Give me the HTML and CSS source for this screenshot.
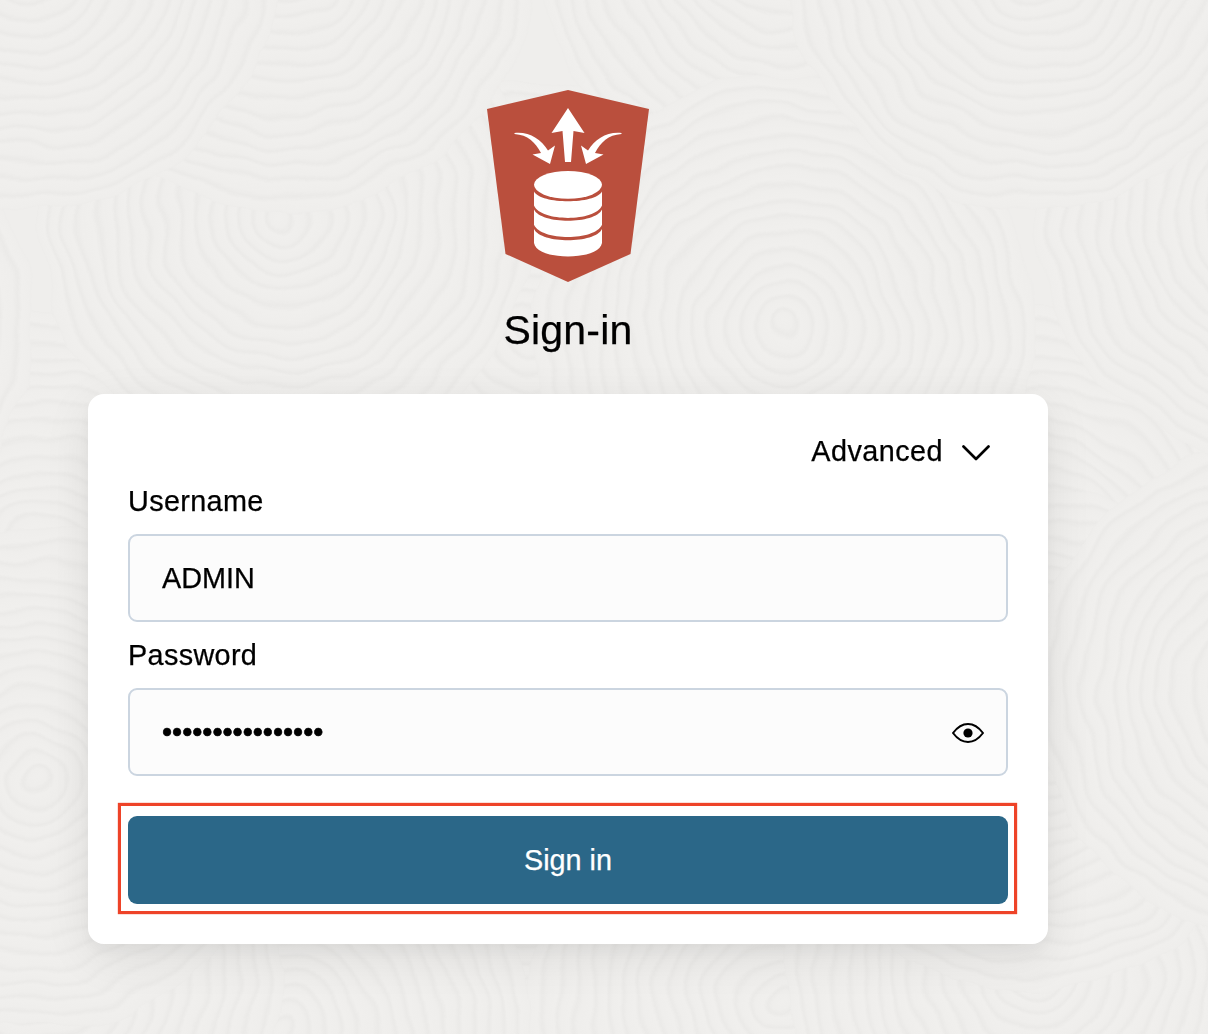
FILE: index.html
```html
<!DOCTYPE html>
<html lang="en">
<head>
<meta charset="utf-8">
<title>Sign-in</title>
<link rel="stylesheet" href="styles.css">
</head>
<body>
<svg class="backdrop" viewBox="0 0 1208 1034" aria-hidden="true">
  <defs>
    <radialGradient id="rings" gradientUnits="userSpaceOnUse" cx="0" cy="0" r="16" spreadMethod="repeat">
      <stop offset="0" stop-color="#f0efed"/>
      <stop offset=".5" stop-color="#efeeec"/>
      <stop offset=".76" stop-color="#ebeae8"/>
      <stop offset="1" stop-color="#f0efed"/>
    </radialGradient>
    <circle id="swirl" r="250" fill="url(#rings)"/>
    <filter id="waver" x="0" y="0" width="1208" height="1034" filterUnits="userSpaceOnUse" color-interpolation-filters="sRGB">
      <feTurbulence type="fractalNoise" baseFrequency=".016" numOctaves="2" seed="4"/>
      <feDisplacementMap in="SourceGraphic" scale="22" xChannelSelector="R" yChannelSelector="G"/>
    </filter>
  </defs>
  <g filter="url(#waver)">
    <rect x="-50" y="-50" width="1310" height="1140" fill="#efeeec"/>
    <use href="#swirl" x="530" y="330"/>
    <use href="#swirl" x="785" y="-60"/>
    <use href="#swirl" x="40" y="560"/>
    <use href="#swirl" x="1040" y="560"/>
    <use href="#swirl" x="530" y="900"/>
    <use href="#swirl" x="780" y="1000"/>
    <use href="#swirl" x="285" y="1030"/>
    <use href="#swirl" x="1285" y="1070"/>
    <use href="#swirl" x="35" y="970"/>
    <use href="#swirl" x="1035" y="970"/>
    <use href="#swirl" x="35" y="780"/>
    <use href="#swirl" x="1035" y="740"/>
    <use href="#swirl" x="1285" y="690"/>
    <use href="#swirl" x="285" y="215"/>
    <use href="#swirl" x="1285" y="215"/>
    <use href="#swirl" x="-220" y="325"/>
    <use href="#swirl" x="785" y="325"/>
    <use href="#swirl" x="285" y="-40"/>
    <use href="#swirl" x="30" y="-40"/>
    <use href="#swirl" x="1035" y="-40"/>
  </g>
</svg>
<main class="page">
  <header class="brand">
    <svg class="logo" viewBox="0 0 162 192" aria-hidden="true">
      <path fill="#ba4f3d" d="M81 0 162 19 143.500 164 81 192 18.500 164 0 19Z"/>
      <g fill="#fff">
        <path d="M81 18 97.500 43 86.500 41 84 72H78L75.500 41 64.500 43Z"/>
        <path id="inflow" d="M27.500 43C42 41.500 54 49 61 60.500L68 55.500 63 74 45.500 64.500 54 63C48 52 41 45 27.500 44Z"/>
        <use href="#inflow" transform="matrix(-1 0 0 1 162 0)"/>
        <ellipse cx="81" cy="94.800" rx="34" ry="13.900"/>
        <path d="M47 101.500C54 114.500 108 114.500 115 101.500V115.500C108 132 54 132 47 115.500Z"/>
        <path d="M47 119.500C54 134.500 108 134.500 115 119.500V134.700C108 151 54 151 47 134.700Z"/>
        <path d="M47 139C54 154 108 154 115 139V153C112 171 50 171 47 153Z"/>
      </g>
    </svg>
    <h1 class="title">Sign-in</h1>
  </header>
  <form class="card">
    <div class="advanced">
      <span>Advanced</span>
      <svg class="chevron" viewBox="0 0 28 16" aria-hidden="true"><path d="M1.500 1.500 14 14 26.500 1.500"/></svg>
    </div>
    <div class="label">Username</div>
    <div class="field">ADMIN</div>
    <div class="label label-password">Password</div>
    <div class="field">
      <span class="dots">••••••••••••••••</span>
      <svg class="eye" viewBox="0 0 32 20" aria-hidden="true"><path d="M1 10C10-2 22-2 31 10 22 22 10 22 1 10Z"/><circle cx="16" cy="10" r="4.600"/></svg>
    </div>
    <div class="submit"><button class="button" type="button">Sign in</button></div>
  </form>
</main>
</body>
</html>
```

FILE: styles.css
```css
* { box-sizing: border-box; }
body {
  margin: 0;
  height: 1034px;
  overflow: hidden;
  background: #efeeec;
  color: #000;
  font: 28.8px/40px "Liberation Sans", Arial, sans-serif;
  -webkit-text-stroke: .25px currentColor;
}
.backdrop { position: absolute; inset: 0; width: 1208px; height: 1034px; z-index: -1; }
.page { width: 1136px; padding-top: 90px; display: flex; flex-direction: column; align-items: center; }
.brand { display: flex; flex-direction: column; align-items: center; height: 304px; }
.logo { width: 162px; height: 192px; }
.title { margin: 24px 0 0; font-size: 41px; line-height: 48px; font-weight: 400; letter-spacing: .2px; }
.card {
  width: 960px;
  height: 550px;
  padding: 37px 40px 40px;
  background: #fff;
  border-radius: 16px;
  box-shadow: 0 12px 48px rgba(0,0,0,.08), 0 8px 16px rgba(0,0,0,.04);
}
.advanced { display: flex; justify-content: flex-end; align-items: center; gap: 19px; height: 40px; padding-right: 18px; letter-spacing: .45px; }
.chevron { width: 28px; height: 16px; margin-top: 3px; fill: none; stroke: #000; stroke-width: 2.7; stroke-linecap: round; stroke-linejoin: round; }
.label { height: 40px; margin: 10px 0 13px; letter-spacing: .35px; }
.label-password { margin-top: 13px; margin-bottom: 13px; }
.field {
  display: flex;
  align-items: center;
  justify-content: space-between;
  height: 88px;
  padding: 0 22px 0 32px;
  border: 2px solid #cbd5e0;
  border-radius: 9px;
  background: #fcfcfc;
}
.dots { -webkit-text-stroke: .6px #000; }
.eye { width: 32px; height: 20px; margin-top: 2px; overflow: visible; }
.eye path { fill: none; stroke: #000; stroke-width: 2; stroke-linejoin: round; }
.submit { position: relative; margin-top: 40px; }
.submit::after {
  content: "";
  position: absolute;
  inset: -13px -9px -10px -10px;
  border: 3px solid #ee4328;
  box-shadow: 0 0 1px #ee4328;
}
.button { display: block; width: 100%; height: 88px; padding: 0; border: 0; border-radius: 9px; background: #2b6788; color: #fff; font: inherit; }
```
